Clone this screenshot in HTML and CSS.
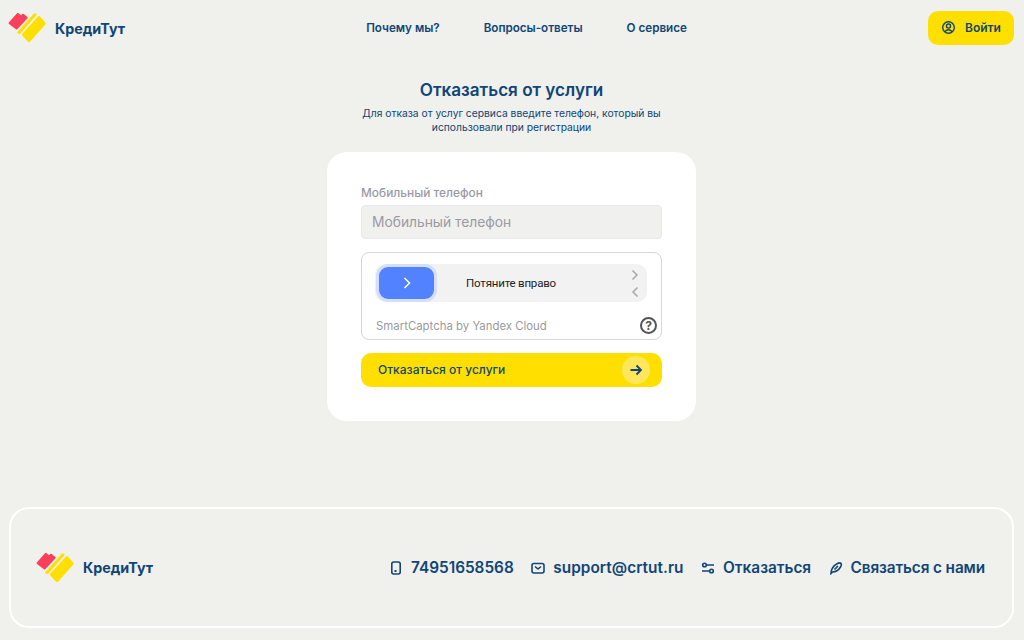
FILE: index.html
```html
<!DOCTYPE html>
<html lang="ru">
  <head>
    <meta charset="UTF-8" />
    <title>КредиТут</title>
    <link rel="stylesheet" href="styles.css">
  </head>
  <body>
    <header class="header">
      <a class="logo">
        <svg class="logo-mark" viewBox="0 0 38 32"><path fill="#f9405a" d="M.8 10.500 9 1.300Q9.800.5 10.600 1.200L13 3.300 14.200 2Q15 1.300 15.800 2L19.300 5Q20 5.700 19.300 6.400L9.500 17Q8.700 17.800 7.900 17.200L1 12Q.3 11.300.8 10.500Z"/><path fill="#ffdf00" d="M9 20.500 26 1.500Q26.800.8 27.600 1.500L28.800 2.700 11.500 22.500ZM14 22 30 4.500Q31 3.700 32 4.500L37.300 10.500Q38.200 11.500 37.300 12.500L22 29.700Q21 30.500 20 29.700L14.300 23.500Q13.700 22.800 14 22Z"/></svg>
        <span>КредиТут</span>
      </a>
      <nav class="nav">
        <a>Почему мы?</a>
        <a>Вопросы-ответы</a>
        <a>О сервисе</a>
      </nav>
      <button class="login">
        <svg viewBox="0 0 16 16" class="login-icon"><circle cx="8" cy="8" r="6.200"/><circle cx="8" cy="6.500" r="2.200"/><path d="M4 12.500Q8 8.500 12 12.500"/></svg>
        Войти
      </button>
    </header>

    <main class="main">
      <h1>Отказаться от услуги</h1>
      <p class="lead">Для отказа от услуг сервиса введите телефон, который вы использовали при регистрации</p>
      <form class="card">
        <label class="field-label">Мобильный телефон</label>
        <input class="phone" type="text" placeholder="Мобильный телефон" />
        <div class="captcha">
          <div class="slider">
            <div class="handle">
              <svg viewBox="0 0 14 14" width="14" height="14"><path d="M4.500 2 9.500 7 4.500 12"/></svg>
            </div>
            <span class="slider-text">Потяните вправо</span>
            <div class="hints">
              <svg viewBox="0 0 14 14" width="14" height="14"><path d="M4.500 2.500 9 7 4.500 11.500"/></svg>
              <svg viewBox="0 0 14 14" width="14" height="14"><path d="M9.500 2.500 5 7 9.500 11.500"/></svg>
            </div>
          </div>
          <div class="captcha-foot">
            <span>SmartCaptcha by Yandex Cloud</span>
            <span class="help">?</span>
          </div>
        </div>
        <button class="submit" type="button">
          <span>Отказаться от услуги</span>
          <span class="submit-arrow">
            <svg viewBox="0 0 14 14" width="14" height="14"><path d="M1.500 7H12M7.500 2.500 12 7 7.500 11.500"/></svg>
          </span>
        </button>
      </form>
    </main>

    <footer class="footer">
      <a class="logo">
        <svg class="logo-mark" viewBox="0 0 38 32"><path fill="#f9405a" d="M.8 10.500 9 1.300Q9.800.5 10.600 1.200L13 3.300 14.200 2Q15 1.300 15.800 2L19.300 5Q20 5.700 19.300 6.400L9.500 17Q8.700 17.800 7.900 17.200L1 12Q.3 11.300.8 10.500Z"/><path fill="#ffdf00" d="M9 20.500 26 1.500Q26.800.8 27.600 1.500L28.800 2.700 11.500 22.500ZM14 22 30 4.500Q31 3.700 32 4.500L37.300 10.500Q38.200 11.500 37.300 12.500L22 29.700Q21 30.500 20 29.700L14.300 23.500Q13.700 22.800 14 22Z"/></svg>
        <span>КредиТут</span>
      </a>
      <div class="contacts">
        <a><svg viewBox="0 0 14 14" class="foot-icon"><rect x="2.800" y="1" width="8.400" height="12" rx="2"/><path d="M5.500 10H7.500" stroke-width="2"/></svg>74951658568</a>
        <a class="mail"><svg viewBox="0 0 14 14" class="foot-icon"><rect x="1" y="2.500" width="12" height="9.500" rx="2"/><path d="M4 5.500 7 8 10 5.500"/></svg>support@crtut.ru</a>
        <a><svg viewBox="0 0 14 14" class="foot-icon"><path d="M6 4H13M1 10H8"/><circle cx="3.500" cy="4" r="1.800"/><circle cx="10.500" cy="10" r="1.800"/></svg>Отказаться</a>
        <a class="write"><svg viewBox="0 0 14 14" class="foot-icon"><path d="M2 12.500Q2 6 8.500 2.500Q11 1.200 12 2.500Q12.800 4 11.500 6Q8.500 11 3.500 11ZM5.500 8.500 9 5"/></svg>Связаться с нами</a>
      </div>
    </footer>
  </body>
</html>
```

FILE: styles.css
```css
* {
  box-sizing: border-box;
}
html,
body {
  height: 100%;
}
body {
  margin: 0;
  display: flex;
  flex-direction: column;
  background-color: #f0f0ec;
  color: #0f4577;
  font-family: Inter, "Noto Sans", sans-serif;
}
svg {
  fill: none;
  stroke: currentColor;
  flex-shrink: 0;
}
.header {
  height: 56px;
  padding: 0 10px 0 8px;
  display: flex;
  justify-content: space-between;
  align-items: center;
}
.logo {
  display: flex;
  align-items: center;
  gap: 9px;
  font-size: 14.300px;
  font-weight: 700;
}
.logo-mark {
  width: 38px;
  height: 32px;
  stroke: none;
}
.nav {
  display: flex;
  gap: 44px;
  font-size: 11.650px;
  font-weight: 600;
}
.login {
  width: 86px;
  height: 34px;
  margin-bottom: 1px;
  border: none;
  border-radius: 10px;
  background-color: #ffdf00;
  color: #0f4577;
  font: 600 12px Inter, sans-serif;
  display: flex;
  align-items: center;
  justify-content: center;
  gap: 9px;
}
.login-icon {
  width: 15px;
  height: 15px;
  stroke-width: 1.500;
}
.main {
  flex: 1;
  display: flex;
  flex-direction: column;
  align-items: center;
  padding: 23px 1px 0 0;
}
h1 {
  margin: 0;
  font-size: 17.100px;
  line-height: 21px;
  font-weight: 600;
}
.lead {
  margin: 6px 0 0;
  width: 310px;
  font-size: 10.300px;
  line-height: 14px;
  text-align: center;
}
.card {
  margin-top: 18px;
  width: 369px;
  height: 269px;
  padding: 33px 34px;
  background-color: #fff;
  border-radius: 20px;
  display: flex;
  flex-direction: column;
}
.field-label {
  font-size: 11.900px;
  line-height: 16px;
  font-weight: 500;
  color: #9a9aa3;
}
.phone {
  margin-top: 4px;
  height: 34px;
  padding: 0 10px;
  border: 1px solid #e8e8ea;
  border-radius: 4px;
  background-color: #f0f0ee;
  font: 400 13.800px Inter, sans-serif;
}
.phone::placeholder {
  color: #9a9aa3;
}
.captcha {
  margin-top: 13px;
  height: 88px;
  padding: 11px 0 0 13px;
  border: 1px solid #d6d6d8;
  border-radius: 8px;
}
.slider {
  width: 272px;
  height: 38px;
  border-radius: 10px;
  background-color: #f2f2f2;
  display: grid;
  grid-template-columns: 1fr auto 1fr;
  align-items: center;
}
.handle {
  width: 61px;
  height: 38px;
  margin-left: 1px;
  border: 3px solid #d4dffc;
  border-radius: 12px;
  background-color: #5282ff;
  color: #fff;
  display: flex;
  align-items: center;
  justify-content: center;
  stroke-width: 1.500;
}
.slider-text {
  font: 11.500px Roboto, sans-serif;
  letter-spacing: -0.2px;
  color: #222;
}
.hints {
  justify-self: end;
  padding-right: 5px;
  display: flex;
  flex-direction: column;
  gap: 3px;
  color: #a8a8a8;
  stroke-width: 1.500;
}
.captcha-foot {
  margin-top: 15px;
  padding: 0 4px 0 1px;
  display: flex;
  justify-content: space-between;
  align-items: center;
  font: 11.400px Inter, sans-serif;
  color: #9a9a9a;
}
.help {
  width: 17px;
  height: 17px;
  border: 2px solid #555;
  border-radius: 50%;
  color: #555;
  font-size: 12px;
  font-weight: 700;
  display: flex;
  align-items: center;
  justify-content: center;
}
.submit {
  margin-top: 13px;
  height: 34px;
  padding: 0 12px 0 17px;
  border: none;
  border-radius: 10px;
  background-color: #ffdf00;
  color: #0f4577;
  font: 500 12px Inter, sans-serif;
  display: flex;
  align-items: center;
  justify-content: space-between;
}
.submit span:first-child {
  margin-bottom: 2px;
}
.submit-arrow {
  width: 28px;
  height: 28px;
  border-radius: 50%;
  background-color: #ffe75c;
  display: flex;
  align-items: center;
  justify-content: center;
  stroke-width: 1.800;
}
.footer {
  margin: 0 10px 12px 9px;
  height: 121px;
  padding: 0 27px 0 25px;
  border: 2px solid #fff;
  border-radius: 20px;
  display: flex;
  align-items: center;
  justify-content: space-between;
}
.contacts {
  display: flex;
  gap: 17.500px;
  font-size: 15.350px;
  font-weight: 600;
}
.contacts a {
  display: flex;
  align-items: center;
  gap: 8px;
}
.contacts .mail {
  letter-spacing: 0.06px;
}
.contacts .write {
  letter-spacing: -0.12px;
}
.foot-icon {
  width: 14px;
  height: 14px;
  stroke-width: 1.600;
}
```
